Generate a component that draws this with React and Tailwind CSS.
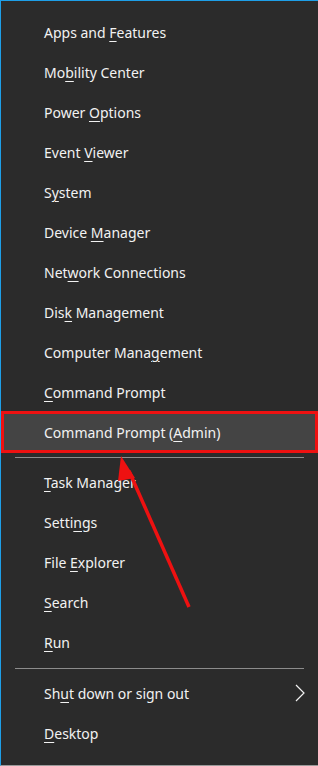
import React from "react";

const U = ({ children }) => <span className="underline underline-offset-[3px] decoration-1">{children}</span>;

const Row = ({ children, chevron }) => (
  <div className="h-10 flex items-center pl-[43px] pr-3 justify-between">
    <span>{children}</span>
    {chevron && (
      <svg width="10" height="18" viewBox="0 0 10 18" className="mr-[1px]">
        <path d="M1 1 L9 9 L1 17" fill="none" stroke="#f2f2f2" strokeWidth="1.2" />
      </svg>
    )}
  </div>
);

export default function App() {
  return (
    <div
      className="relative w-[318px] h-[766px] bg-[#2b2b2b] text-[#f2f2f2] text-[14px] border-t border-t-[#1e9fe8] border-l border-l-[#1e9fe8] border-b border-b-[#9a9a9a] overflow-hidden"
      style={{ fontFamily: '"Noto Sans", "Open Sans", sans-serif' }}
    >
      <div className="pt-[11px]">
        <Row>Apps and <U>F</U>eatures</Row>
        <Row>Mo<U>b</U>ility Center</Row>
        <Row>Power <U>O</U>ptions</Row>
        <Row>Event <U>V</U>iewer</Row>
        <Row>S<U>y</U>stem</Row>
        <Row>Device <U>M</U>anager</Row>
        <Row>Net<U>w</U>ork Connections</Row>
        <Row>Dis<U>k</U> Management</Row>
        <Row>Computer Mana<U>g</U>ement</Row>
        <Row><U>C</U>ommand Prompt</Row>
        <div className="h-[42px] -mt-[1px] -mb-[1px] flex items-center pl-[40px] border-[3px] border-[#ee1111] bg-[#444444]">
          Command Prompt (<U>A</U>dmin)
        </div>
        <div className="mx-[14px] mt-[5px] mb-[4px] h-px bg-[#8c8c8c]" />
        <Row><U>T</U>ask Manager</Row>
        <Row>Setti<U>n</U>gs</Row>
        <Row>File <U>E</U>xplorer</Row>
        <Row><U>S</U>earch</Row>
        <Row><U>R</U>un</Row>
        <div className="mx-[14px] mt-[6px] mb-[4px] h-px bg-[#8c8c8c]" />
        <Row chevron>Sh<U>u</U>t down or sign out</Row>
        <Row><U>D</U>esktop</Row>
      </div>
      <svg className="absolute left-0 top-0 pointer-events-none" width="318" height="766">
        <line x1="188" y1="606" x2="128" y2="470" stroke="#ee1111" strokeWidth="3.5" />
        <polygon points="120,455 134,477 117,480" fill="#ee1111" />
      </svg>
    </div>
  );
}
